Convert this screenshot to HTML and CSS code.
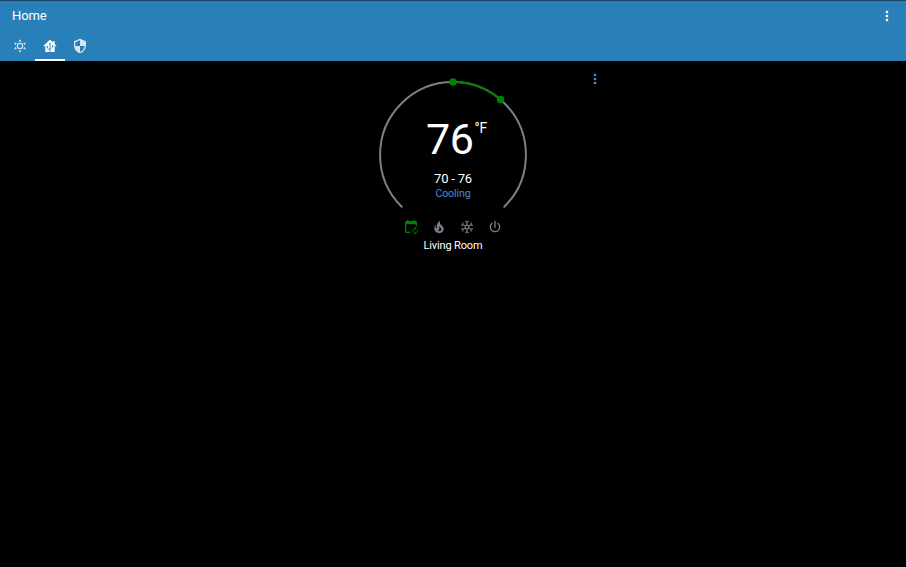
FILE: index.html
```html
<!DOCTYPE html>
<html lang="en">
<head>
<meta charset="utf-8">
<title>Home</title>
<link rel="stylesheet" href="styles.css">
</head>
<body>
<header class="header">
  <div class="toolbar">
    <h1 class="title">Home</h1>
    <svg class="icon" viewBox="0 0 24 24"><path d="M12 16a2 2 0 1 1 0 4 2 2 0 0 1 0-4m0-6a2 2 0 1 1 0 4 2 2 0 0 1 0-4m0-6a2 2 0 1 1 0 4 2 2 0 0 1 0-4"/></svg>
  </div>
  <nav class="tabs">
    <a class="tab"><svg class="icon" viewBox="0 0 24 24"><circle class="line" cx="12" cy="12" r="4"/><path d="M12 2l2.300 3.400H9.700zM12 22l2.300-3.400H9.700zM3.300 7l4 .2-2.200 3.700zM3.300 17l1.800-3.900 2.200 3.700zM20.700 7l-4 .2 2.200 3.700zM20.700 17l-1.800-3.900-2.200 3.700z"/></svg></a>
    <a class="tab active"><svg class="icon" viewBox="0 0 24 24"><path d="M12 2.300L1.800 12.500H5V21h14v-8.500h3.200L19 9.300V5h-3v1.300z"/><g class="tree"><path d="M12 21V9M12 18.500l-4-3.500v-2M12 17l4-3.500v-2"/><circle cx="12" cy="8.500" r=".7"/><circle cx="8" cy="13" r=".7"/><circle cx="16" cy="12" r=".7"/></g></svg></a>
    <a class="tab"><svg class="icon" viewBox="0 0 24 24"><path d="M12,12H19C18.47,16.11 15.72,19.78 12,20.92V12H5V6.3L12,3.19M12,1L3,5V11C3,16.55 6.84,21.73 12,23C17.16,21.73 21,16.55 21,11V5L12,1Z"/></svg></a>
  </nav>
</header>
<main class="view">
  <section class="card">
    <svg class="icon more" viewBox="0 0 24 24"><path d="M12 16a2 2 0 1 1 0 4 2 2 0 0 1 0-4m0-6a2 2 0 1 1 0 4 2 2 0 0 1 0-4m0-6a2 2 0 1 1 0 4 2 2 0 0 1 0-4"/></svg>
    <div class="dial">
      <svg class="ring" viewBox="0 0 160 140">
        <path class="track" d="M28.740 131.760A72.900 72.900 0 1 1 131.260 131.760"/>
        <path class="range" d="M80 7A73 73 0 0 1 127.300 24.500"/>
        <circle class="handle" cx="80" cy="7" r="3.800"/>
        <circle class="handle" cx="127.500" cy="24.600" r="3.800"/>
      </svg>
      <div class="reading">
        <div class="current"><span>76</span><span class="unit">°F</span></div>
        <div class="target">70 - 76</div>
        <div class="action">Cooling</div>
      </div>
    </div>
    <div class="modes">
      <svg class="icon selected" viewBox="0 0 24 24"><path d="M6 1h2v2h8V1h2v2h1a2 2 0 0 1 2 2v6h-2V8H5v11h6v2H5a2 2 0 0 1-2-2V5a2 2 0 0 1 2-2h1z"/><path class="line thin" d="M14.800 19.800a4 4 0 0 1 2.600-5.600M21.200 15.700a4 4 0 0 1-2.600 5.600"/><path d="M17.300 11.700l2.800 2.500-2.800 2.500zM18.700 23.800l-2.800-2.500 2.800-2.500z"/></svg>
      <svg class="icon" viewBox="0 0 24 24"><path d="M17.66 11.2C17.43 10.9 17.15 10.64 16.89 10.38C16.22 9.78 15.46 9.35 14.82 8.72C13.33 7.26 13 4.85 13.95 3C13 3.23 12.17 3.75 11.46 4.32C8.87 6.4 7.85 10.07 9.07 13.22C9.11 13.32 9.15 13.42 9.15 13.55C9.15 13.77 9 13.97 8.8 14.05C8.57 14.15 8.33 14.09 8.14 13.93C8.08 13.88 8.04 13.83 8 13.76C6.87 12.33 6.69 10.28 7.45 8.64C5.78 10 4.87 12.3 5 14.47C5.06 14.97 5.12 15.47 5.29 15.97C5.43 16.57 5.7 17.17 6 17.7C7.08 19.43 8.95 20.67 10.96 20.92C13.1 21.19 15.39 20.8 17.03 19.32C18.86 17.66 19.5 15 18.56 12.72L18.43 12.46C18.22 12 17.66 11.2 17.66 11.2M14.5 17.5C14.22 17.74 13.76 18 13.4 18.1C12.28 18.5 11.16 17.94 10.5 17.28C11.69 17 12.4 16.12 12.61 15.23C12.78 14.43 12.46 13.77 12.33 13C12.21 12.26 12.23 11.63 12.5 10.94C12.69 11.32 12.89 11.7 13.13 12C13.9 13 15.11 13.44 15.37 14.8C15.41 14.94 15.43 15.08 15.43 15.23C15.46 16.05 15.1 16.95 14.5 17.5Z"/></svg>
      <svg class="icon" viewBox="0 0 24 24"><path class="line" d="M12 4v5M12 15v5M9.400 10.500L5 8M14.600 13.500L19 16M9.400 13.500L5 16M14.600 10.500L19 8M12 9l2.600 1.500v3L12 15l-2.600-1.500v-3zM9.500 3L12 5l2.500-2M9.500 21l2.500-2 2.500 2M3 9.700l3-1.200L5.500 5.300M21 9.700l-3-1.200.5-3.200M3 14.300l3 1.200-.5 3.200M21 14.300l-3 1.200.5 3.200"/></svg>
      <svg class="icon" viewBox="0 0 24 24"><path d="M16.56,5.44L15.11,6.89C16.84,7.94 18,9.83 18,12A6,6 0 0,1 12,18A6,6 0 0,1 6,12C6,9.83 7.16,7.94 8.88,6.88L7.44,5.44C5.36,6.88 4,9.28 4,12A8,8 0 0,0 12,20A8,8 0 0,0 20,12C20,9.28 18.64,6.88 16.56,5.44M13,3H11V13H13"/></svg>
    </div>
    <div class="name">Living Room</div>
  </section>
</main>
</body>
</html>
```

FILE: styles.css
```css
* { box-sizing: border-box; }
body {
  margin: 0;
  min-height: 567px;
  background: #000;
  color: #fff;
  font-family: Roboto, "Liberation Sans", sans-serif;
}
.icon { display: block; width: 16px; height: 16px; fill: currentColor; overflow: visible; }
.line { fill: none; stroke: currentColor; stroke-width: 1.7; }
.thin { stroke-width: 1.3; }
.header { height: 61px; background: #2980b9; border-top: 1px solid #1c4563; }
.toolbar {
  display: flex;
  align-items: center;
  justify-content: space-between;
  height: 30px;
  padding: 0 11px 0 12px;
}
.title { margin: 0; font-size: 13px; line-height: 20px; font-weight: 400; letter-spacing: -0.1px; }
.tabs { display: flex; height: 30px; padding-left: 4.5px; }
.tab {
  display: flex;
  align-items: center;
  justify-content: center;
  width: 30.2px;
  padding-top: 2px;
  border-bottom: 2px solid transparent;
  color: #d4e6f1;
}
.active { border-color: #fff; color: #fff; }
.tree { fill: #2980b9; stroke: #2980b9; stroke-width: 1.2; }
.tree path { fill: none; }
.view { display: flex; justify-content: center; padding-top: 5px; }
.card {
  position: relative;
  display: flex;
  flex-direction: column;
  align-items: center;
  width: 310px;
  padding-top: 9px;
}
.more { position: absolute; top: 5px; right: 5px; color: #488fd8; }
.dial { display: grid; width: 160px; height: 140px; }
.ring, .reading { grid-area: 1 / 1; }
.ring { width: 160px; height: 140px; fill: none; stroke-width: 2; stroke-linecap: round; }
.track { stroke: #7d7f8b; }
.range { stroke: #008000; }
.handle { fill: #008000; }
.reading { display: flex; flex-direction: column; align-items: center; padding-top: 40px; }
.current { display: flex; font-size: 43px; line-height: 48px; letter-spacing: -0.4px; margin-left: 7px; }
.unit { font-size: 14px; line-height: 18px; letter-spacing: -0.3px; padding-top: 4px; margin-left: 1px; }
.target { margin-top: 8px; font-size: 13px; line-height: 15px; letter-spacing: -0.2px; }
.action { margin-top: 1px; font-size: 10.6px; line-height: 14px; letter-spacing: -0.1px; color: #4a8ad4; }
.modes { display: flex; gap: 11.7px; margin-top: 4px; color: #7d7f8b; }
.selected { color: #008000; }
.name { margin-top: 4px; font-size: 11px; line-height: 14px; letter-spacing: -0.15px; }
```
